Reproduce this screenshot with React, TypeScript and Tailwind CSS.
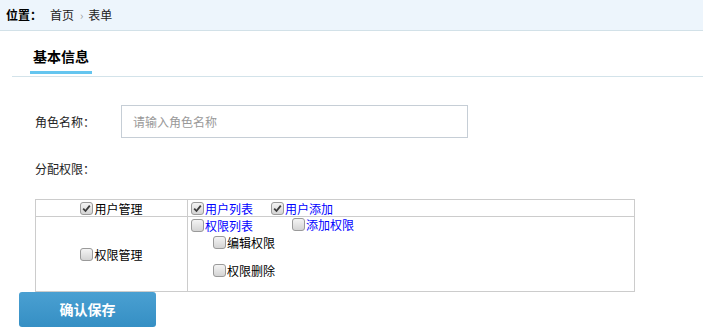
const font = '[font-family:"Noto_Sans_CJK_SC","Microsoft_YaHei",sans-serif]'

function Box({ checked = false }: { checked?: boolean }) {
  return (
    <span className="inline-flex w-[13px] h-[13px] shrink-0 items-center justify-center rounded-[3px] border border-[#9a9a9a] bg-gradient-to-b from-[#f4f4f4] to-[#d4d4d4] mr-[1px]">
      {checked && (
        <svg width="9" height="9" viewBox="0 0 9 9">
          <path d="M1.2 4.6 L3.5 7 L7.8 1.6" fill="none" stroke="#3a3a3a" strokeWidth="1.8" />
        </svg>
      )}
    </span>
  )
}

function Item({ label, checked, blue }: { label: string; checked?: boolean; blue?: boolean }) {
  return (
    <span className="inline-flex items-center">
      <Box checked={checked} />
      <span className={blue ? 'text-[#0000ff]' : 'text-black'}>{label}</span>
    </span>
  )
}

export default function App() {
  return (
    <div className={`w-[703px] h-[336px] overflow-hidden bg-white text-[12px] text-[#222] ${font}`}>
      {/* breadcrumb */}
      <div className="h-[31px] bg-[#edf5fc] border-b border-[#d2e1e8] flex items-center pl-[6px] leading-[20px]">
        <span className="font-bold text-black">位置：</span>
        <span className="ml-[8px]">首页</span>
        <span className="ml-[6px] mr-[5px] text-[#999] text-[11px]">›</span>
        <span>表单</span>
      </div>

      {/* tab */}
      <div className="pl-[12px]">
        <div className="h-[46px] border-b border-[#d3e3ea] flex items-end pb-[2px]">
          <div className="ml-[18px] w-[62px] text-center text-[14px] leading-[20px] font-bold text-black pb-[5px] border-b-[3px] border-[#64c5ef]">
            基本信息
          </div>
        </div>
      </div>

      {/* form */}
      <div className="pl-[35px]">
        <div className="mt-[28px] flex items-center">
          <div className="w-[86px] leading-[20px]">角色名称：</div>
          <input
            className="w-[347px] h-[33px] border border-[#c6ced6] px-[11px] text-[12px] outline-none placeholder:text-[#999]"
            placeholder="请输入角色名称"
          />
        </div>
        <div className="mt-[21px] leading-[20px]">分配权限：</div>

        <table className="mt-[20px] w-[600px] border-collapse text-[12px] leading-[15px]">
          <tbody>
            <tr className="h-[17px]">
              <td className="w-[152px] border border-[#cccccc] text-center align-middle">
                <span className="inline-flex">
                  <Item label="用户管理" checked />
                </span>
              </td>
              <td className="border border-[#cccccc] pl-[3px] align-middle">
                <div className="flex items-center">
                  <Item label="用户列表" checked blue />
                  <span className="ml-[18px]">
                    <Item label="用户添加" checked blue />
                  </span>
                </div>
              </td>
            </tr>
            <tr className="h-[75px]">
              <td className="border border-[#cccccc] text-center align-middle">
                <span className="inline-flex pt-[2px]">
                  <Item label="权限管理" />
                </span>
              </td>
              <td className="border border-[#cccccc] pl-[3px] align-top">
                <div className="flex flex-col items-start pb-[11px]">
                  <div className="flex items-center">
                    <Item label="权限列表" blue />
                    <span className="ml-[39px]">
                      <Item label="添加权限" blue />
                    </span>
                  </div>
                  <div className="ml-[22px] mt-[2px]">
                    <Item label="编辑权限" />
                  </div>
                  <div className="ml-[22px] mt-[12px]">
                    <Item label="权限删除" />
                  </div>
                </div>
              </td>
            </tr>
          </tbody>
        </table>
      </div>

      <div className="pl-[19px]">
        <button className="w-[137px] h-[35px] rounded-[3px] bg-gradient-to-b from-[#4aa0d2] to-[#358fc4] text-white font-bold text-[14px]">
          确认保存
        </button>
      </div>
    </div>
  )
}
